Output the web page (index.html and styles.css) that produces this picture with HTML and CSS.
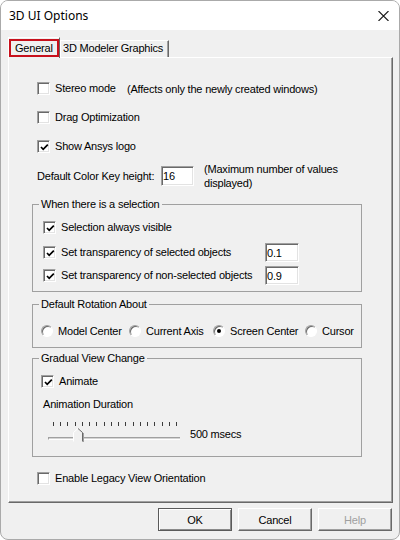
FILE: index.html
```html
<!DOCTYPE html>
<html lang="en">
<head>
    <meta charset="UTF-8">
    <meta name="viewport" content="width=device-width, initial-scale=1.0">
    <title>3D UI Options</title>
    <link rel="stylesheet" href="styles.css">
</head>
<body>
    <div class="window">
        <div class="titlebar">
            <span class="title">3D UI Options</span>
            <svg class="close" width="11" height="10" viewBox="0 0 11 10">
                <path d="M0.5 0 L10.5 10 M10.5 0 L0.5 10" stroke="#1a1a1a" stroke-width="1.1" fill="none"/>
            </svg>
        </div>

        <div class="client">
            <div class="tabs">
                <div class="tab active"><span class="tab-label">General</span></div>
                <div class="tab">3D Modeler Graphics</div>
            </div>

            <div class="panel">
                <div class="row stereo">
                    <label class="check stereo-check"><span class="box"></span>Stereo mode</label>
                    <span class="note">(Affects only the newly created windows)</span>
                </div>
                <div class="row">
                    <label class="check"><span class="box"></span>Drag Optimization</label>
                </div>
                <div class="row">
                    <label class="check"><span class="box"><svg width="9" height="9" viewBox="0 0 9 9"><path d="M1 4 L3.2 6.3 L7.8 1.6" stroke="#000" stroke-width="1.7" fill="none"/></svg></span>Show Ansys logo</label>
                </div>
                <div class="row key-row">
                    <span class="key-label">Default Color Key height:</span>
                    <input class="field key-field" type="text" value="16">
                    <span class="key-note">(Maximum number of values<br>displayed)</span>
                </div>

                <fieldset class="group selection">
                    <legend>When there is a selection</legend>
                    <div class="grow">
                        <label class="check"><span class="box"><svg width="9" height="9" viewBox="0 0 9 9"><path d="M1 4 L3.2 6.3 L7.8 1.6" stroke="#000" stroke-width="1.7" fill="none"/></svg></span>Selection always visible</label>
                    </div>
                    <div class="grow with-field">
                        <label class="check fixed"><span class="box"><svg width="9" height="9" viewBox="0 0 9 9"><path d="M1 4 L3.2 6.3 L7.8 1.6" stroke="#000" stroke-width="1.7" fill="none"/></svg></span>Set transparency of selected objects</label>
                        <input class="field small" type="text" value="0.1">
                    </div>
                    <div class="grow with-field tight">
                        <label class="check fixed"><span class="box"><svg width="9" height="9" viewBox="0 0 9 9"><path d="M1 4 L3.2 6.3 L7.8 1.6" stroke="#000" stroke-width="1.7" fill="none"/></svg></span>Set transparency of non-selected objects</label>
                        <input class="field small" type="text" value="0.9">
                    </div>
                </fieldset>

                <fieldset class="group rotation">
                    <legend>Default Rotation About</legend>
                    <div class="radios">
                        <label class="radio"><span class="dot"></span>Model Center</label>
                        <label class="radio"><span class="dot"></span>Current Axis</label>
                        <label class="radio"><span class="dot on"></span>Screen Center</label>
                        <label class="radio"><span class="dot"></span>Cursor</label>
                    </div>
                </fieldset>

                <fieldset class="group gradual">
                    <legend>Gradual View Change</legend>
                    <div class="grow">
                        <label class="check"><span class="box"><svg width="9" height="9" viewBox="0 0 9 9"><path d="M1 4 L3.2 6.3 L7.8 1.6" stroke="#000" stroke-width="1.7" fill="none"/></svg></span>Animate</label>
                    </div>
                    <div class="duration-label">Animation Duration</div>
                    <div class="slider-row">
                        <div class="slider">
                            <div class="ticks">
                                <i></i><i></i><i></i><i></i><i></i><i></i>
                                <i></i><i></i><i></i><i></i><i></i><i></i>
                                <i></i><i></i><i></i><i></i><i></i><i></i>
                            </div>
                            <div class="track"></div>
                            <svg class="thumb" width="11" height="14" viewBox="0 0 11 14">
                                <path d="M0.5 13.5 V4.5 L5 0.5 L9.5 4.5 V13.5 Z" fill="#f0f0f0"/>
                                <polyline points="0.5,13.5 0.5,4.5 5,0.5" stroke="#fff" fill="none"/>
                                <polyline points="5,0.5 9.5,4.5 9.5,13.5" stroke="#696969" fill="none"/>
                                <line x1="10.5" y1="5" x2="10.5" y2="14" stroke="#a0a0a0"/>
                            </svg>
                        </div>
                        <span class="slider-value">500 msecs</span>
                    </div>
                </fieldset>

                <div class="row legacy">
                    <label class="check"><span class="box"></span>Enable Legacy View Orientation</label>
                </div>
            </div>

            <div class="buttons">
                <button class="btn default">OK</button>
                <button class="btn">Cancel</button>
                <button class="btn" disabled>Help</button>
            </div>
        </div>
    </div>
</body>
</html>
```

FILE: styles.css
```css
* {
    box-sizing: border-box;
}

body {
    margin: 0;
    background: #ffffff;
    font-family: 'Liberation Sans', Arial, sans-serif;
    font-size: 11px;
    letter-spacing: -0.2px;
    color: #000;
}

.window {
    width: 400px;
    height: 540px;
    border: 1px solid #aaaaaa;
    border-radius: 8px;
    overflow: hidden;
    background: #f0f0f0;
    display: flex;
    flex-direction: column;
}

/* title bar */
.titlebar {
    height: 29px;
    flex: none;
    background: #ffffff;
    display: flex;
    align-items: center;
    justify-content: space-between;
    padding: 0 10px 0 8px;
}

.title {
    font-family: 'Segoe UI', 'Noto Sans', sans-serif;
    font-size: 12px;
    letter-spacing: 0;
}

.close {
    display: block;
}

.client {
    flex: 1;
    padding: 7px 6px 0 7px;
}

/* tabs */
.tabs {
    display: flex;
    align-items: flex-end;
    height: 20px;
}

.tab {
    height: 17px;
    line-height: 15px;
    padding: 0 5px 0 2px;
    border-top: 1px solid #fff;
    border-left: 1px solid #fff;
    border-right: 1px solid #696969;
    box-shadow: inset -1px 0 0 #a0a0a0;
}

.tab.active {
    height: 21px;
    margin-bottom: -1px;
    padding: 1px 0 0 0;
    background: #f0f0f0;
    position: relative;
    z-index: 1;
    box-shadow: none;
}

.tab-label {
    display: block;
    width: 50px;
    height: 18px;
    line-height: 14px;
    padding-left: 4px;
    border: 2px solid #c8101c;
}

.panel {
    height: 446px;
    border: 1px solid;
    border-color: #fff #696969 #696969 #fff;
    box-shadow: inset -1px -1px 0 #a0a0a0;
}

/* plain rows */
.row {
    display: flex;
    align-items: center;
    height: 13px;
    margin: 16px 0 0 28px;
}

.row.stereo {
    margin-top: 24px;
}

.row.legacy {
    margin-top: 15px;
}

.check {
    display: flex;
    align-items: center;
    gap: 5px;
    line-height: 13px;
    white-space: nowrap;
}

.stereo-check {
    width: 90px;
}

.box {
    width: 13px;
    height: 13px;
    flex: none;
    display: flex;
    align-items: center;
    justify-content: center;
    background: #fff;
    border: 1px solid;
    border-color: #a0a0a0 #fff #fff #a0a0a0;
    box-shadow: inset 1px 1px 0 #696969, inset -1px -1px 0 #e3e3e3;
}

.box svg {
    display: block;
    margin: 1px 0 0 1px;
}

.key-row {
    height: 20px;
    margin-top: 13px;
}

.key-label {
    width: 124px;
}

.key-note {
    margin-left: 10px;
    line-height: 14px;
}

.field {
    font-family: inherit;
    font-size: 11px;
    letter-spacing: inherit;
    color: #000;
    height: 20px;
    padding: 0 0 0 1px;
    background: #fff;
    border: 1px solid;
    border-color: #a0a0a0 #fff #fff #a0a0a0;
    box-shadow: inset 1px 1px 0 #696969, inset -1px -1px 0 #e3e3e3;
    outline: none;
}

.key-field {
    width: 33px;
}

.field.small {
    width: 34px;
    height: 19px;
}

/* group boxes */
.group {
    margin: 6px 0 0 23px;
    width: 330px;
    min-width: 0;
    border: 1px solid #a0a0a0;
    padding: 0 0 6px 10px;
}

.group legend {
    padding: 0 2px;
    margin-left: -4px;
    line-height: 13px;
}

.group.selection {
    margin-top: 12px;
}

.group.rotation {
    padding: 13px 0 10px 8px;
}

.group.rotation legend,
.group.gradual legend {
    margin-left: -2px;
}

.group.gradual {
    margin-top: 4px;
    padding: 0 0 14px 8px;
}

.grow {
    display: flex;
    align-items: center;
    height: 13px;
    margin-top: 10px;
}

.grow.with-field {
    height: 19px;
    margin-top: 9px;
}

.grow.tight {
    margin-top: 4px;
}

.check.fixed {
    width: 222px;
}

.radios {
    display: grid;
    grid-template-columns: 88px 84px 92px auto;
    height: 13px;
}

.radio {
    display: flex;
    align-items: center;
    gap: 5px;
    white-space: nowrap;
}

.dot {
    width: 12px;
    height: 12px;
    flex: none;
    border-radius: 50%;
    background: #fff;
    border: 1px solid;
    border-color: #a0a0a0 #fff #fff #a0a0a0;
    box-shadow: inset 1px 1px 0 #696969;
    display: flex;
    align-items: center;
    justify-content: center;
}

.dot.on::after {
    content: '';
    width: 4px;
    height: 4px;
    border-radius: 50%;
    background: #000;
}

.duration-label {
    margin: 10px 0 0 2px;
    line-height: 13px;
}

/* trackbar */
.slider-row {
    display: flex;
    align-items: center;
    margin-top: 11px;
}

.slider {
    position: relative;
    width: 132px;
    height: 20px;
    margin-left: 7px;
}

.ticks {
    display: flex;
    justify-content: space-between;
    padding: 0 3px 0 5px;
    height: 4px;
}

.ticks i {
    width: 1px;
    height: 4px;
    background: #3c3c3c;
}

.track {
    margin-top: 11px;
    height: 3px;
    border-top: 1px solid #a0a0a0;
    border-left: 1px solid #a0a0a0;
    border-bottom: 1px solid #fff;
    background: #d4d4d4;
}

.thumb {
    position: absolute;
    left: 25px;
    top: 6px;
}

.slider-value {
    margin: 3px 0 0 10px;
}

/* dialog buttons */
.buttons {
    display: flex;
    justify-content: flex-end;
    gap: 6px;
    margin: 5px 1px 0 0;
}

.btn {
    width: 74px;
    height: 23px;
    font-family: inherit;
    font-size: 11px;
    letter-spacing: inherit;
    color: #000;
    background: #f0f0f0;
    border: 1px solid;
    border-color: #fff #696969 #696969 #fff;
    box-shadow: inset -1px -1px 0 #a0a0a0;
    padding: 0;
}

.btn.default {
    border-color: #5a5a5a;
    box-shadow: inset 1px 1px 0 #fff, inset -1px -1px 0 #8a8a8a;
}

.btn:disabled {
    color: #a0a0a0;
}
```
